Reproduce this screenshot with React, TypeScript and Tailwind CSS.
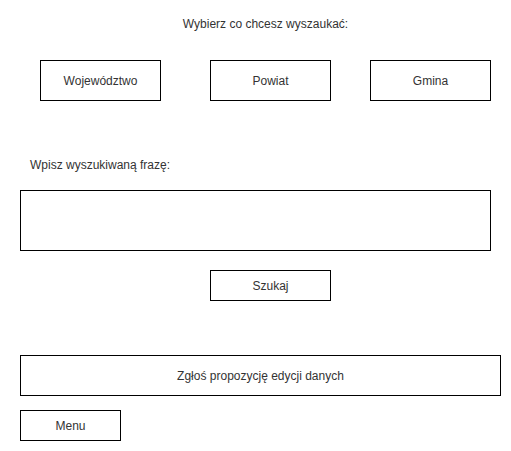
import React from 'react';

const font = { fontFamily: '"Liberation Sans", Arial, sans-serif' };

function Box({ label, className }: { label?: string; className: string }) {
  return (
    <div className={`flex items-center justify-center border border-black bg-white text-[12px] text-[#333] ${className}`}>
      {label}
    </div>
  );
}

export default function App() {
  return (
    <div className="w-[511px] h-[451px] bg-white overflow-hidden" style={font}>
      {/* Title */}
      <div className="pt-[17px] pl-[20px] text-center text-[12px] leading-[14px] text-[#333]">
        Wybierz co chcesz wyszaukać:
      </div>

      {/* Category choices */}
      <div className="mt-[29px] flex pl-[40px]">
        <Box label="Województwo" className="w-[121px] h-[41px]" />
        <Box label="Powiat" className="w-[121px] h-[41px] ml-[49px]" />
        <Box label="Gmina" className="w-[121px] h-[41px] ml-[39px]" />
      </div>

      {/* Search phrase */}
      <div className="mt-[57px] pl-[30px] text-[12px] leading-[14px] text-[#333]">
        Wpisz wyszukiwaną frazę:
      </div>
      <div className="mt-[18px] pl-[20px]">
        <Box className="w-[471px] h-[61px]" />
      </div>
      <div className="mt-[19px] pl-[210px]">
        <Box label="Szukaj" className="w-[121px] h-[31px]" />
      </div>

      {/* Bottom actions */}
      <div className="mt-[54px] pl-[20px]">
        <Box label="Zgłoś propozycję edycji danych" className="w-[481px] h-[41px]" />
      </div>
      <div className="mt-[14px] pl-[20px]">
        <Box label="Menu" className="w-[101px] h-[31px]" />
      </div>
    </div>
  );
}
